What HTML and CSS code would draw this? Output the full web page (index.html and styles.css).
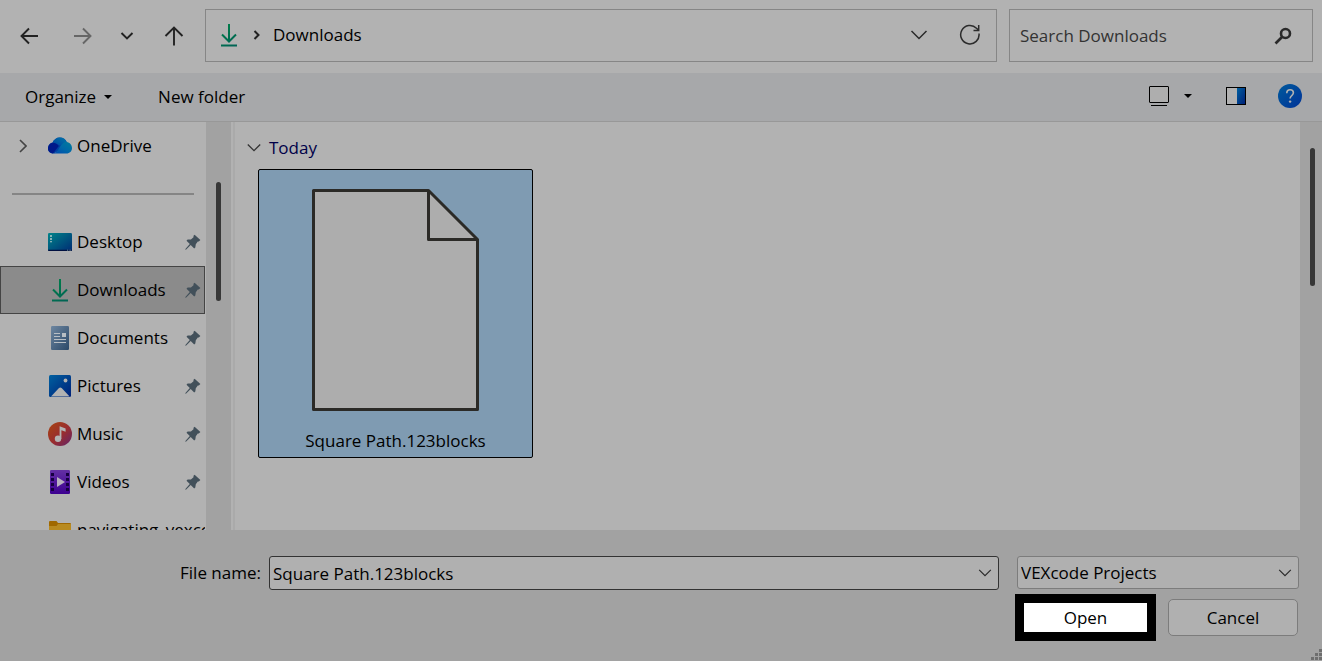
FILE: index.html
```html
<!DOCTYPE html>
<html lang="en">
<head>
<meta charset="utf-8">
<title>Open</title>
<link rel="stylesheet" href="styles.css">
</head>
<body>
<svg class="defs" aria-hidden="true">
  <defs>
    <linearGradient id="green" gradientUnits="userSpaceOnUse" x1="4" y1="2" x2="18" y2="22"><stop offset="0" stop-color="#008048"/><stop offset="1" stop-color="#006454"/></linearGradient>
    <linearGradient id="blue" x1="0" y1="0" x2="1" y2="1"><stop offset="0" stop-color="#0060a0"/><stop offset="1" stop-color="#002078"/></linearGradient>
    <linearGradient id="help" x1="0" y1="0" x2="1" y2="1"><stop offset="0" stop-color="#005a9c"/><stop offset="1" stop-color="#003298"/></linearGradient>
    <linearGradient id="desk" x1="0" y1="0" x2="1" y2="1"><stop offset="0" stop-color="#008489"/><stop offset="1" stop-color="#002c74"/></linearGradient>
    <linearGradient id="doc" x1="0" y1="0" x2="1" y2="1"><stop offset="0" stop-color="#6d86a0"/><stop offset="1" stop-color="#2b4868"/></linearGradient>
    <linearGradient id="music" x1="0" y1="0" x2="1" y2="1"><stop offset="0" stop-color="#a84410"/><stop offset=".55" stop-color="#982c30"/><stop offset="1" stop-color="#60246c"/></linearGradient>
    <linearGradient id="video" x1="0" y1="0" x2="0" y2="1"><stop offset="0" stop-color="#6430a4"/><stop offset="1" stop-color="#3c0090"/></linearGradient>
    <linearGradient id="cloud" x1="0" y1="1" x2="1" y2="0"><stop offset="0" stop-color="#0048b0"/><stop offset=".5" stop-color="#0068a8"/><stop offset="1" stop-color="#007c9c"/></linearGradient>
    <linearGradient id="cloud2" x1="0" y1="1" x2="1" y2="0"><stop offset="0" stop-color="#0040a0"/><stop offset="1" stop-color="#0078a8"/></linearGradient>
    <symbol id="download" viewBox="0 0 24 24"><path d="M12 1v17M5 11.500l7 7 7-7M4 22.500h16" fill="none" stroke="url(#green)" stroke-width="2"/></symbol>
    <symbol id="chevron" viewBox="0 0 18 18"><path d="M1.500 5L9 12.500 16.500 5" fill="none" stroke="#2a2a2a" stroke-width="1.500"/></symbol>
    <symbol id="pin" viewBox="0 0 16 16"><path d="M9.600.8L15.400 6 13.800 7.400 12.800 7.600 10.800 10.200 10.300 13.400 9.200 14.400 5.700 11 1.200 15.400.2 15.800.6 14.800 4.800 10 1.500 6.700 2.600 5.600 5.900 5.500 8.500 3.200 8.500 1.800z" fill="#42505a"/></symbol>
  </defs>
</svg>

<div class="dialog">
  <header class="nav">
    <div class="nav-buttons">
      <button class="icon-btn" aria-label="Back"><svg width="20" height="18" viewBox="0 0 20 18"><path d="M18 9H1.500M9 1.500L1.500 9 9 16.500" fill="none" stroke="#222" stroke-width="1.900"/></svg></button>
      <button class="icon-btn" aria-label="Forward"><svg width="20" height="18" viewBox="0 0 20 18"><path d="M1 9h16.500M10 1.500L17.500 9 10 16.500" fill="none" stroke="#666" stroke-width="1.900"/></svg></button>
      <button class="icon-btn recent" aria-label="Recent locations"><svg width="14" height="10" viewBox="0 0 14 10"><path d="M1.500 2L7 7.500 12.500 2" fill="none" stroke="#222" stroke-width="1.900"/></svg></button>
      <button class="icon-btn" aria-label="Up"><svg width="20" height="20" viewBox="0 0 20 20"><path d="M10 19.500V2M1.500 10L10 1.500l8.500 8.500" fill="none" stroke="#222" stroke-width="1.900"/></svg></button>
    </div>
    <div class="address">
      <svg width="24" height="24"><use href="#download"/></svg>
      <svg width="8" height="12" viewBox="0 0 8 12"><path d="M1.500 2l4 4-4 4" fill="none" stroke="#222" stroke-width="2"/></svg>
      <button class="text-btn">Downloads</button>
      <button class="icon-btn history" aria-label="Previous locations"><svg width="18" height="18"><use href="#chevron"/></svg></button>
      <button class="icon-btn" aria-label="Refresh"><svg width="22" height="22" viewBox="0 0 22 22"><path d="M20 9.500A9.200 9.200 0 1 1 17.500 4.300L19.500 6M19.700 1v5.500H14.500" fill="none" stroke="#2c2c2c" stroke-width="1.500"/></svg></button>
    </div>
    <div class="search">
      <input type="search" aria-label="Search Downloads" placeholder="Search Downloads">
      <svg width="18" height="18" viewBox="0 0 18 18"><circle cx="11.500" cy="6.500" r="4.500" fill="none" stroke="#2a2a2a" stroke-width="2.600"/><path d="M8.500 9.500L1.500 16.500" stroke="#2a2a2a" stroke-width="2.600"/></svg>
    </div>
  </header>

  <div class="toolbar">
    <button class="text-btn organize">Organize <svg width="8" height="4" viewBox="0 0 8 4"><path d="M0 0h8L4 4z" fill="#000"/></svg></button>
    <button class="text-btn">New folder</button>
    <div class="tools">
      <button class="icon-btn" aria-label="View"><svg width="20" height="20" viewBox="0 0 20 20"><rect x=".5" y=".5" width="19" height="16" rx=".5" fill="#aeaeae" stroke="#000"/><path d="M2 19.500h16" stroke="#000"/></svg></button>
      <button class="icon-btn view-more" aria-label="View options"><svg width="8" height="4" viewBox="0 0 8 4"><path d="M0 0h8L4 4z" fill="#000"/></svg></button>
      <button class="icon-btn preview" aria-label="Preview pane"><svg width="20" height="18" viewBox="0 0 20 18"><rect x=".5" y=".5" width="19" height="17" fill="#b2b2b2" stroke="#000"/><path d="M11 1h8v16h-8z" fill="url(#blue)"/></svg></button>
      <button class="icon-btn" aria-label="Help"><svg width="24" height="24" viewBox="0 0 24 24"><circle cx="12" cy="12" r="12" fill="url(#help)"/><path d="M8.800 9.200C8.800 7 10.200 5.800 12.100 5.800s3.300 1.200 3.300 3c0 2.500-3.300 2.900-3.300 5.800" fill="none" stroke="#b2b2b2" stroke-width="1.600"/><circle cx="12.100" cy="17.600" r="1.200" fill="#b2b2b2"/></svg></button>
    </div>
  </div>

  <main class="main">
    <nav class="sidebar" aria-label="Folders">
      <a class="place" href="#"><svg class="expander" width="8" height="14" viewBox="0 0 8 14"><path d="M1 1l6 6-6 6" fill="none" stroke="#444" stroke-width="1.600"/></svg><svg class="place-icon" width="24" height="24" viewBox="0 0 24 24"><path d="M5 19.500C2 19.500 0 17.500 0 14.600 0 11.500 2 9 4.600 8.600 5.800 5.500 8.500 3.500 11.800 3.500c3.200 0 6 1.900 7 4.700l-7.500 8-5 3.300z" fill="#0040a0"/><path d="M4.600 8.600C5.800 5.500 8.500 3.500 11.800 3.500c3.200 0 6 1.900 7 4.700l-4.500 4z" fill="url(#cloud2)"/><path d="M4.600 8.700c2.600 0 4.500 1 6.200 3.400L5 19.500C2 19.500 0 17.500 0 14.600 0 11.500 2 9 4.600 8.700z" fill="#00198a"/><path d="M5 19.500c3 0 4.500-2.500 6.500-6 2-3.500 4-5.500 7.300-5.500 3 .5 5.200 3 5.200 6 0 3.200-2.400 5.500-5.500 5.500z" fill="url(#cloud)"/></svg><span class="name">OneDrive</span></a>
      <hr class="divider">
      <a class="place" href="#"><svg class="place-icon" width="24" height="24" viewBox="0 0 24 24"><rect y="3" width="24" height="18" rx="1.200" fill="url(#desk)"/><path d="M2 5.300h2v1.500H2zM2 8.300h2v1.500H2zM2 11.300h2v1H2z" fill="#b2c8c8"/><path d="M0 19.800h24V20a1 1 0 0 1-1 1H1a1 1 0 0 1-1-1z" fill="#001040"/><path d="M19 20.200h1.200M21.500 20.200h1.200" stroke="#8aa" stroke-width=".8"/></svg><span class="name">Desktop</span><svg class="pin" width="16" height="16"><use href="#pin"/></svg></a>
      <a class="place selected" href="#" aria-current="true"><svg class="place-icon" width="24" height="24"><use href="#download"/></svg><span class="name">Downloads</span><svg class="pin" width="16" height="16"><use href="#pin"/></svg></a>
      <a class="place" href="#"><svg class="place-icon" width="24" height="24" viewBox="0 0 24 24"><rect x="3" width="18" height="24" rx="1.200" fill="url(#doc)"/><path d="M6 7.500h6M6 10.500h6M6 13.500h12M6 16.500h12" stroke="#b8bec4" stroke-width="1.200"/><path d="M14 7h4v4h-4z" fill="#b8bec4"/></svg><span class="name">Documents</span><svg class="pin" width="16" height="16"><use href="#pin"/></svg></a>
      <a class="place" href="#"><svg class="place-icon" width="24" height="24" viewBox="0 0 24 24"><rect x="1" y="1" width="22" height="22" rx="1.500" fill="url(#blue)"/><path d="M3 22.500l8-8.500q1.300-1.200 2.600 0l8 8.500z" fill="#b2b2b2"/><circle cx="17.500" cy="6.500" r="1.900" fill="#b2b2b2"/></svg><span class="name">Pictures</span><svg class="pin" width="16" height="16"><use href="#pin"/></svg></a>
      <a class="place" href="#"><svg class="place-icon" width="24" height="24" viewBox="0 0 24 24"><circle cx="12" cy="12" r="12" fill="url(#music)"/><circle cx="10" cy="16.800" r="3.200" fill="#b2b2b2"/><path d="M11.600 17V4.200l6 2.300v3.300l-4.200-1.600V17z" fill="#b2b2b2"/></svg><span class="name">Music</span><svg class="pin" width="16" height="16"><use href="#pin"/></svg></a>
      <a class="place" href="#"><svg class="place-icon" width="24" height="24" viewBox="0 0 24 24"><rect x="2" width="20" height="24" rx="1.200" fill="url(#video)"/><path d="M3 3h3v3H3zM3 8h3v3H3zM3 13h3v3H3zM3 18h3v3H3zM18 3h3v3h-3zM18 8h3v3h-3zM18 13h3v3h-3zM18 18h3v3h-3z" fill="#160040"/><path d="M9 7l8 5-8 5z" fill="#b8b0c0"/></svg><span class="name">Videos</span><svg class="pin" width="16" height="16"><use href="#pin"/></svg></a>
      <a class="place" href="#"><svg class="place-icon" width="24" height="24" viewBox="0 0 24 24"><path d="M1 4.500V4a1 1 0 0 1 1-1h6.500L10 5h12a1 1 0 0 1 1 1v15H1z" fill="#a06800"/><path d="M1 8h7.500L10 6h13v16H1z" fill="#b88a20"/></svg><span class="name">navigating_vexcode</span></a>
    </nav>
    <div class="track side-track"><div class="thumb"></div></div>
    <section class="files">
      <button class="group"><svg width="14" height="10" viewBox="0 0 14 10"><path d="M.8 1.500L7 7.700l6.200-6.200" fill="none" stroke="#333" stroke-width="1.300"/></svg>Today</button>
      <button class="file">
        <svg width="167" height="222" viewBox="0 0 167 222"><path d="M1.500 1.500h115l49 49v170H1.500z" fill="#adadad" stroke="#2b2a27" stroke-width="3" stroke-linejoin="round"/><path d="M116.500 1.500v49h49" fill="none" stroke="#2b2a27" stroke-width="3" stroke-linejoin="round"/></svg>
        <span>Square Path.123blocks</span>
      </button>
    </section>
    <div class="track file-track"><div class="thumb"></div></div>
  </main>

  <footer class="footer">
    <label class="file-label" for="filename">File name:</label>
    <div class="combo filename">
      <input id="filename" type="text" value="Square Path.123blocks">
      <svg class="combo-arrow" width="14" height="14"><use href="#chevron"/></svg>
    </div>
    <div class="actions">
      <div class="combo filetype">
        <select aria-label="File type"><option>VEXcode Projects</option></select>
        <svg class="combo-arrow" width="14" height="14"><use href="#chevron"/></svg>
      </div>
      <div class="buttons">
        <button class="open">Open</button>
        <button class="cancel">Cancel</button>
      </div>
    </div>
    <svg class="grip" width="12" height="12" viewBox="0 0 12 12"><path d="M9 0h3v3H9zM5 4h3v3H5zM9 4h3v3H9zM1 8h3v3H1zM5 8h3v3H5zM9 8h3v3H9z" fill="#6e6e6e"/></svg>
  </footer>
</div>
</body>
</html>
```
FILE: styles.css
```css
* { box-sizing: border-box; }

body {
  margin: 0;
  background: #a2a2a2;
  color: #000;
  font-family: "Open Sans", "Noto Sans", sans-serif;
  font-size: 17px;
  line-height: 24px;
}

button, input, select {
  margin: 0;
  padding: 0;
  border: 0;
  background: none;
  color: inherit;
  font: inherit;
}

svg { display: block; flex: none; }
.defs { position: absolute; width: 0; height: 0; }

.dialog { display: flex; flex-direction: column; height: 100vh; }

.icon-btn { display: flex; flex: none; align-items: center; justify-content: center; }

/* Navigation row */
.nav {
  display: flex;
  flex: none;
  align-items: center;
  gap: 12px;
  height: 73px;
  padding: 0 9px 2px 20px;
  background: #b2b2b2;
}
.nav-buttons { display: flex; gap: 33px; width: 173px; }
.recent { width: 14px; margin: 0 -3px 0 -6px; }
.address, .search {
  display: flex;
  align-items: center;
  height: 53px;
  border: 1px solid #868686;
}
.address { flex: 1; gap: 12px; padding: 0 15px 2px 11px; }
.history { margin-left: auto; margin-right: 19px; }
.search { width: 304px; padding: 0 20px 0 10px; }
.search input { flex: 1; min-width: 0; outline: 0; }
.search input::placeholder { color: #333; opacity: 1; }

/* Command row */
.toolbar {
  display: flex;
  flex: none;
  align-items: center;
  gap: 46px;
  height: 49px;
  padding: 0 20px 0 25px;
  border-bottom: 1px solid #989898;
  background: #a7a8aa;
}
.organize { display: flex; align-items: center; gap: 8px; }
.tools { display: flex; align-items: center; margin-left: auto; padding-bottom: 2px; }
.view-more { margin: 0 34px 0 15px; }
.preview { margin-right: 32px; }

/* Folder tree and file list */
.main { display: flex; flex: 1; min-height: 0; background: #b2b2b2; }
.sidebar { flex: none; width: 206px; padding-right: 1px; overflow: hidden; }
.place {
  display: flex;
  align-items: center;
  height: 48px;
  padding: 0 4px 0 48px;
  color: #000;
  text-decoration: none;
}
.place.selected { padding: 0 3px 0 47px; border: 1px solid #444; background: #8b8b8b; }
.expander { margin: 0 21px 0 -29px; }
.name { flex: 1; margin-left: 5px; overflow: hidden; white-space: nowrap; }
.place:last-child { padding-right: 0; }
.divider { height: 2px; margin: 23px 11px 23px 12px; border: 0; background: #858585; }

.track { display: flex; flex: none; justify-content: center; background: #a2a2a2; }
.thumb { width: 5px; border-radius: 3px; background: #373737; }
.side-track { width: 25px; padding-top: 60px; }
.side-track .thumb { height: 119px; }
.file-track { width: 22px; padding: 26px 0 0 2px; }
.file-track .thumb { height: 138px; }

.files { flex: 1; min-width: 0; margin-left: 2px; padding: 14px 16px; border-left: 2px solid #aaa; overflow: hidden; }
.group { display: flex; align-items: center; gap: 8px; height: 24px; margin-left: -4px; color: #000048; }
.file {
  display: flex;
  flex-direction: column;
  align-items: center;
  gap: 18px;
  width: 275px;
  height: 289px;
  margin: 9px 0 0 7px;
  padding-top: 19px;
  border: 1px solid #000;
  border-radius: 2px;
  background: #7f9bb2;
}

/* File name, type and actions */
.footer {
  position: relative;
  display: flex;
  flex: none;
  align-items: flex-start;
  height: 131px;
  padding: 26px 23px 0 0;
  background: #a2a2a2;
}
.file-label { width: 269px; padding: 5px 8px 0 0; text-align: right; }
.combo { position: relative; border: 1px solid #7c7c7c; border-radius: 3px; background: #b0b0b0; }
.combo input, .combo select { width: 100%; height: 100%; padding: 0 32px 0 3px; outline: 0; appearance: none; }
.combo-arrow { position: absolute; top: 9px; right: 6px; pointer-events: none; }
.filename { flex: 1; height: 34px; border-color: #333; }
.actions { width: 284px; margin-left: 16px; }
.filetype { height: 33px; margin-left: 2px; }
.buttons { display: flex; align-items: center; gap: 12px; margin-top: 5px; }
.open { width: 141px; height: 47px; border: 9px solid #000; background: #fff; }
.cancel { width: 130px; height: 37px; border: 1px solid #7c7c7c; border-radius: 5px; background: #b0b0b0; }
.grip { position: absolute; right: 0; bottom: 0; }
```
